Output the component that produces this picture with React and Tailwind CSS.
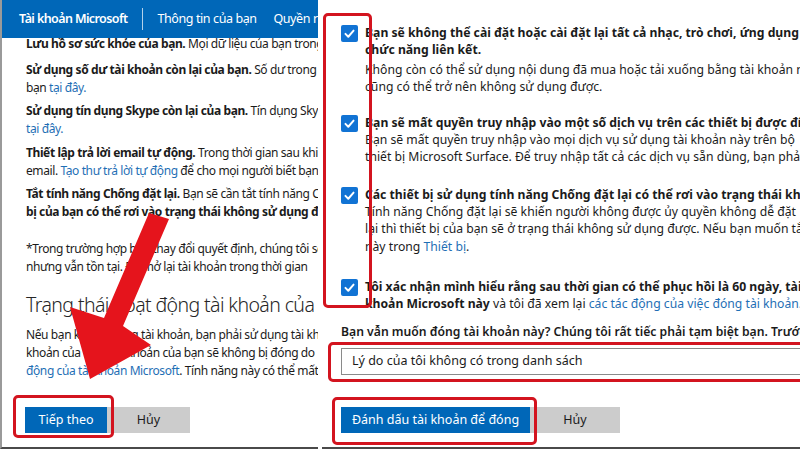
import React from "react";

const FONT = { fontFamily: '"Noto Sans", "Open Sans", sans-serif' };

function L({ children, className = "" }) {
  return (
    <div className={"h-[18px] leading-[18px] whitespace-nowrap " + className}>{children}</div>
  );
}

function R({ children, className = "" }) {
  return (
    <div className={"h-[17px] leading-[17px] whitespace-nowrap " + className}>{children}</div>
  );
}

const A = ({ children }) => <span className="text-[#1f6fb5]">{children}</span>;
const B = ({ children }) => <span className="font-bold">{children}</span>;

function Check() {
  return (
    <div className="w-[17px] h-[17px] shrink-0 rounded-[2px] bg-[#1173d4] flex items-center justify-center mt-[1px]">
      <svg width="13" height="13" viewBox="0 0 16 16">
        <path d="M3 8.5 L6.5 12 L13 4.5" fill="none" stroke="white" strokeWidth="2.4" strokeLinecap="round" strokeLinejoin="round" />
      </svg>
    </div>
  );
}

function LeftPanel() {
  return (
    <div className="relative w-[318px] h-[449px] shrink-0 overflow-hidden border-l-2 border-b-2 border-l-[#9a9a9a] border-b-[#4a4a4a] bg-white">
      <div className="relative z-10 h-[38px] bg-[#0067b8] flex items-center text-white text-[12.5px] whitespace-nowrap">
        <span className="ml-[17px] w-[110px] font-semibold tracking-[-0.6px]">Tài khoản Microsoft</span>
        <span className="ml-[15px] w-px h-[22px] bg-white/70 shrink-0" />
        <span className="ml-[14px] w-[89px] tracking-[-0.4px]">Thông tin của bạn</span>
        <span className="ml-[27px] tracking-[-0.4px]">Quyền riêng tư</span>
      </div>
      <div className="-mt-[3px] pl-[24px] text-[12px] tracking-[-0.4px] text-[#1b1b1b]">
        <L><B>Lưu hồ sơ sức khỏe của bạn.</B> Mọi dữ liệu của bạn trong</L>
        <div className="mt-[8px]">
          <L><B>Sử dụng số dư tài khoản còn lại của bạn.</B> Số dư trong</L>
          <L>bạn <A>tại đây.</A></L>
        </div>
        <div className="mt-[5px]">
          <L><B>Sử dụng tín dụng Skype còn lại của bạn.</B> Tín dụng Skype</L>
          <L><A>tại đây.</A></L>
        </div>
        <div className="mt-[6px]">
          <L><B>Thiết lập trả lời email tự động.</B> Trong thời gian sau khi</L>
          <L>email. <A>Tạo thư trả lời tự động</A> để cho mọi người biết bạn</L>
        </div>
        <div className="mt-[5px]">
          <L><B>Tắt tính năng Chống đặt lại.</B> Bạn sẽ cần tắt tính năng Chống</L>
          <L><B>bị của bạn có thể rơi vào trạng thái không sử dụng được.</B></L>
        </div>
        <div className="mt-[19px]">
          <L>*Trong trường hợp bạn thay đổi quyết định, chúng tôi sẽ</L>
          <L>nhưng vẫn tồn tại. Để mở lại tài khoản trong thời gian</L>
        </div>
        <div className="mt-[15px] h-[28px] leading-[28px] text-[19.5px] tracking-[-0.6px] font-light text-[#262626] whitespace-nowrap">
          Trạng thái hoạt động tài khoản của bạn
        </div>
        <div className="mt-[7px]">
          <L>Nếu bạn không đóng tài khoản, bạn phải sử dụng tài khoản</L>
          <L>khoản của bạn. Tài khoản của bạn sẽ không bị đóng do</L>
          <L><A>động của tài khoản Microsoft</A>. Tính năng này có thể mất</L>
        </div>
        <div className="mt-[27px] -ml-[1px] flex text-[12.5px] tracking-normal">
          <div className="w-[82px] h-[26px] bg-[#0067b8] text-white flex items-center justify-center">Tiếp theo</div>
          <div className="w-[83px] h-[26px] bg-[#cccccc] text-[#1b1b1b] flex items-center justify-center">Hủy</div>
        </div>
      </div>
      <div className="absolute left-[11px] top-[395px] w-[101px] h-[43px] border-[3px] border-[#d3141f] rounded-[5px]" />
      <svg className="absolute left-0 top-0 z-20" width="318" height="449" viewBox="0 0 318 449">
        <polygon points="147,213 167,219 121,326 149,345 88,379 68,307 102,318" fill="#e5141c" />
      </svg>
    </div>
  );
}

function Item({ children, mt }) {
  return (
    <div className={"flex gap-[7px] " + mt}>
      <Check />
      <div>{children}</div>
    </div>
  );
}

function RightPanel() {
  return (
    <div className="relative flex-1 h-[449px] overflow-hidden border-b-2 border-b-[#4a4a4a] bg-white">
      <div className="pl-[19px] pt-[24px] text-[12.2px] text-[#1b1b1b]">
        <Item mt="">
          <R className="font-bold">Bạn sẽ không thể cài đặt hoặc cài đặt lại tất cả nhạc, trò chơi, ứng dụng và</R>
          <R className="font-bold">chức năng liên kết.</R>
          <R className="mt-[3px]">Không còn có thể sử dụng nội dung đã mua hoặc tải xuống bằng tài khoản này</R>
          <R>cũng có thể trở nên không sử dụng được.</R>
        </Item>
        <Item mt="mt-[19px]">
          <R className="font-bold">Bạn sẽ mất quyền truy nhập vào một số dịch vụ trên các thiết bị được đính kèm</R>
          <R>Bạn sẽ mất quyền truy nhập vào mọi dịch vụ sử dụng tài khoản này trên bộ</R>
          <R>thiết bị Microsoft Surface. Để truy nhập tất cả các dịch vụ sẵn dùng, bạn phải</R>
        </Item>
        <Item mt="mt-[21px]">
          <R className="font-bold">Các thiết bị sử dụng tính năng Chống đặt lại có thể rơi vào trạng thái không</R>
          <R>Tính năng Chống đặt lại sẽ khiến người không được ủy quyền không dễ đặt</R>
          <R>lại thì thiết bị của bạn sẽ ở trạng thái không sử dụng được. Nếu bạn muốn tắt</R>
          <R className="mt-[1px]">này trong <A>Thiết bị</A>.</R>
        </Item>
        <Item mt="mt-[23px]">
          <R className="font-bold">Tôi xác nhận mình hiểu rằng sau thời gian có thể phục hồi là 60 ngày, tài</R>
          <R><B>khoản Microsoft này</B> và tôi đã xem lại <A>các tác động của việc đóng tài khoản.</A></R>
        </Item>
        <R className="mt-[11px] font-semibold">Bạn vẫn muốn đóng tài khoản này? Chúng tôi rất tiếc phải tạm biệt bạn. Trước</R>
        <div className="mt-[8px] h-[27px] border border-[#8a8a8a] border-r-0 flex items-center pl-[10px] text-[12.5px] whitespace-nowrap">
          Lý do của tôi không có trong danh sách
        </div>
        <div className="mt-[32px] flex text-[12.5px]">
          <div className="w-[189px] h-[26px] bg-[#0067b8] text-white flex items-center justify-center">Đánh dấu tài khoản để đóng</div>
          <div className="w-[90px] h-[26px] bg-[#cccccc] text-[#1b1b1b] flex items-center justify-center">Hủy</div>
        </div>
      </div>
      <div className="absolute left-[1px] top-[13px] w-[49px] h-[295px] border-[3px] border-[#d3141f] rounded-[5px]" />
      <div className="absolute left-[6px] top-[342px] w-[500px] h-[40px] border-[3px] border-[#d3141f] rounded-[5px]" />
      <div className="absolute left-[10px] top-[397px] w-[205px] h-[48px] border-[3px] border-[#d3141f] rounded-[5px]" />
    </div>
  );
}

export default function App() {
  return (
    <div className="w-[800px] h-[450px] bg-white flex gap-[4px] overflow-hidden" style={FONT}>
      <LeftPanel />
      <RightPanel />
    </div>
  );
}
